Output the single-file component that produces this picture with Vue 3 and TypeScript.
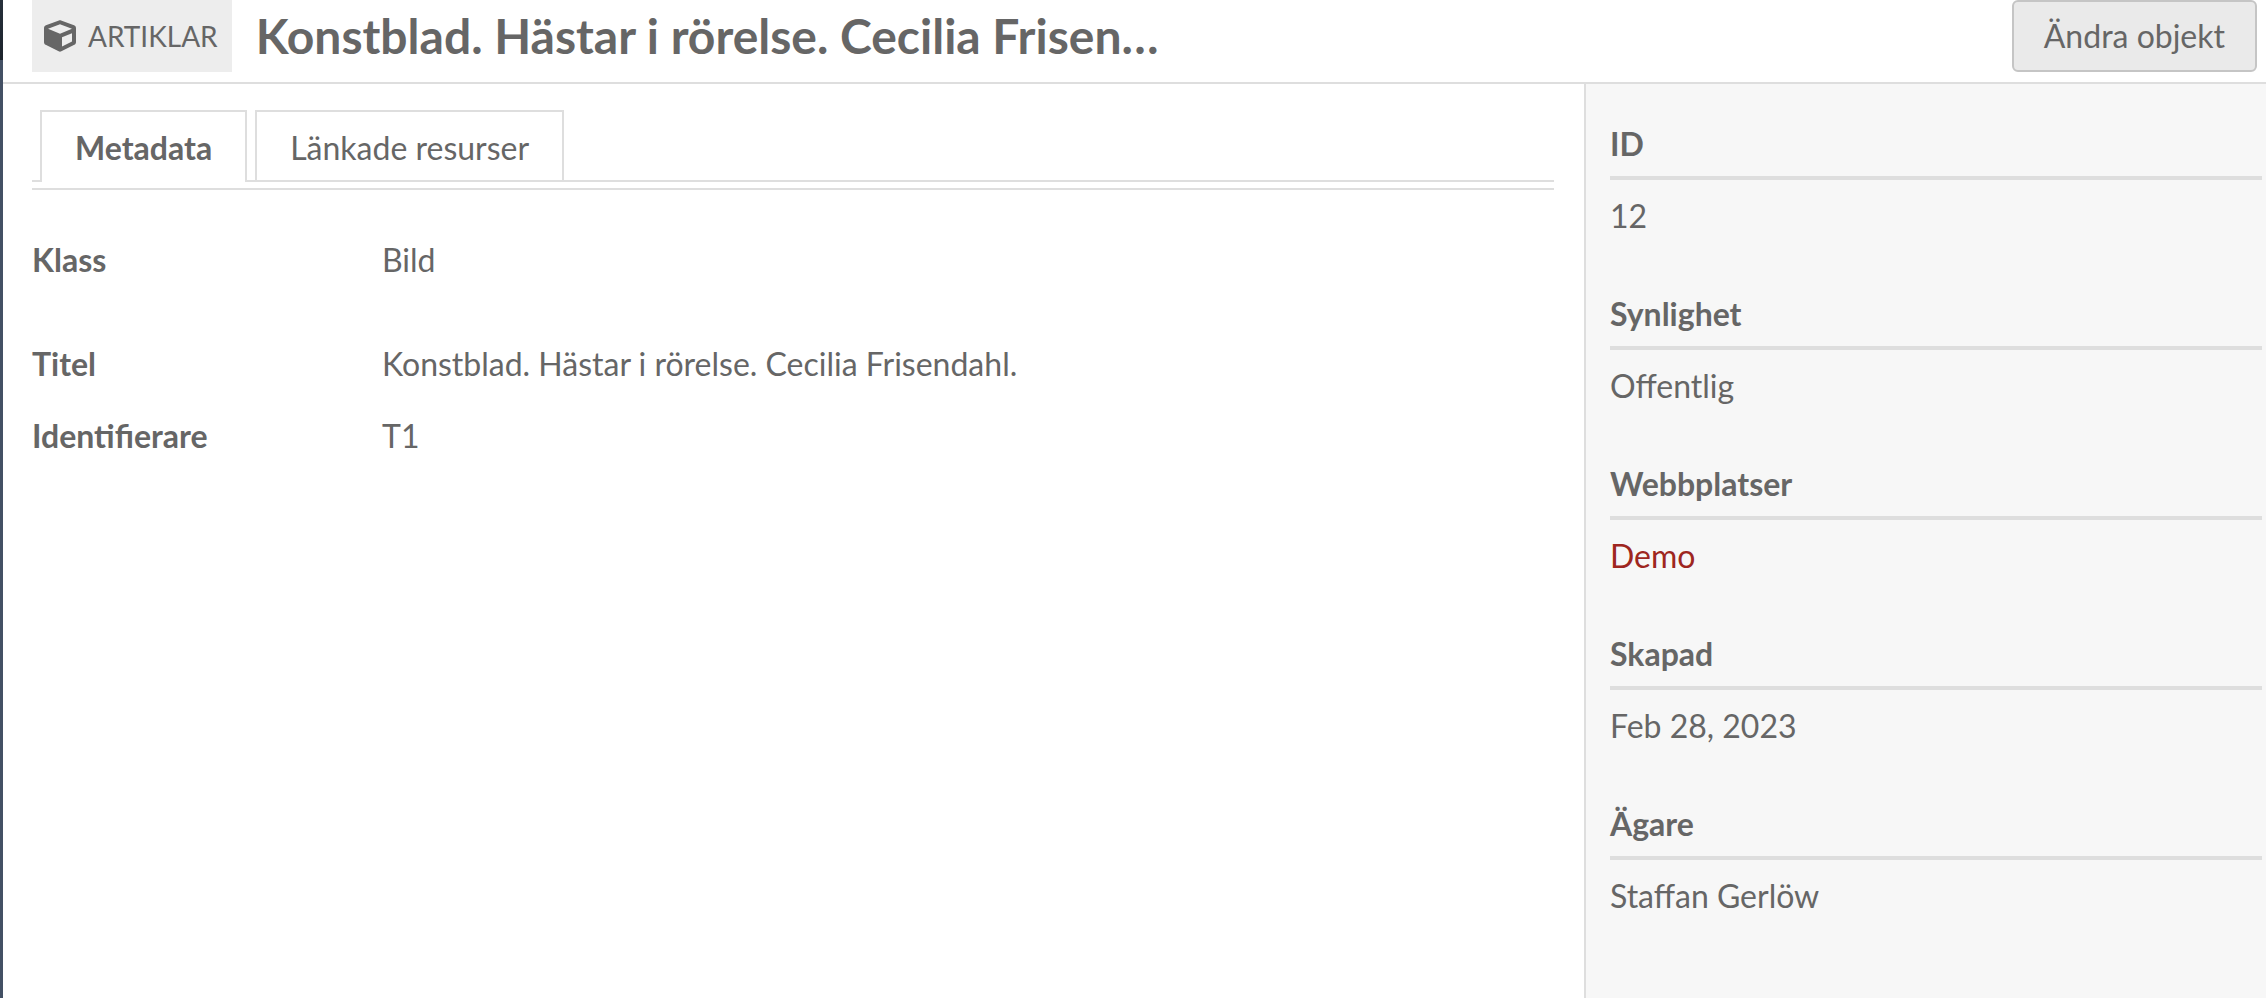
<script setup lang="ts">
interface Field { label: string; value: string; spaced?: boolean }
interface Detail { label: string; value: string; href?: string }

const tabs: string[] = ['Metadata', 'Länkade resurser']
const fields: Field[] = [
  { label: 'Klass', value: 'Bild', spaced: true },
  { label: 'Titel', value: 'Konstblad. Hästar i rörelse. Cecilia Frisendahl.' },
  { label: 'Identifierare', value: 'T1' },
]
const details: Detail[] = [
  { label: 'ID', value: '12' },
  { label: 'Synlighet', value: 'Offentlig' },
  { label: 'Webbplatser', value: 'Demo', href: '#demo' },
  { label: 'Skapad', value: 'Feb 28, 2023' },
  { label: 'Ägare', value: 'Staffan Gerlöw' },
]
</script>

<template>
  <div class="shell">
    <div class="rail"></div>
    <div class="page">
      <header class="header">
        <span class="kind">
          <svg class="cube" viewBox="0 0 512 512" aria-hidden="true">
            <path fill="currentColor" d="M239.1 6.3l-208 78c-18.700 7-31.100 25-31.100 45v225.100c0 18.200 10.300 34.800 26.500 42.900l208 104c13.500 6.800 29.400 6.800 42.900 0l208-104c16.300-8.100 26.500-24.800 26.500-42.900V129.300c0-20-12.400-37.900-31.100-44.900l-208-78C262 2.200 250 2.200 239.100 6.300zM256 68.400l192 72v1.100l-192 78-192-78v-1.100l192-72zm32 356V275.500l160-65v133.900l-160 80z" />
          </svg>
          <span>ARTIKLAR</span>
        </span>
        <h1 class="title">Konstblad. Hästar i rörelse. Cecilia Frisen…</h1>
        <button type="button" class="edit">Ändra objekt</button>
      </header>
      <div class="columns">
        <main class="main">
          <nav class="tabs">
            <button v-for="(tab, i) in tabs" :key="tab" type="button" class="tab" :class="{ active: i === 0 }">{{ tab }}</button>
          </nav>
          <dl class="fields">
            <div v-for="f in fields" :key="f.label" class="field" :class="{ spaced: f.spaced }">
              <dt>{{ f.label }}</dt>
              <dd>{{ f.value }}</dd>
            </div>
          </dl>
        </main>
        <aside class="side">
          <section v-for="d in details" :key="d.label" class="detail">
            <h2>{{ d.label }}</h2>
            <p><a v-if="d.href" :href="d.href">{{ d.value }}</a><template v-else>{{ d.value }}</template></p>
          </section>
        </aside>
      </div>
    </div>
  </div>
</template>

<style>
body { margin: 0; }
</style>

<style scoped>
.shell {
  display: flex;
  min-height: 100vh;
  background: #fff;
  color: #666;
  font-family: Lato, "Open Sans", sans-serif;
  font-size: 32px;
  line-height: 48px;
}
.rail {
  flex: 0 0 3px;
  background: linear-gradient(#27303b, #1c232c 60px, #435064 60px);
}
.page {
  flex: 1;
  min-width: 0;
  display: flex;
  flex-direction: column;
}
.header {
  display: flex;
  align-items: flex-start;
  height: 82px;
  padding: 0 9px 0 29px;
  border-bottom: 2px solid #dedede;
}
.kind {
  display: flex;
  align-items: center;
  gap: 12px;
  height: 72px;
  padding: 0 14px 0 12px;
  background: #ededed;
  font-size: 28px;
}
.cube { width: 32px; height: 32px; }
.title {
  flex: 1;
  margin: 0 0 0 24px;
  font-size: 48px;
  line-height: 72px;
  font-weight: 700;
}
.edit {
  box-sizing: border-box;
  height: 72px;
  padding: 0 30px;
  border: 2px solid #c5c5c5;
  border-radius: 6px;
  background: #eaeaea;
  color: inherit;
  font: inherit;
}
.columns { flex: 1; display: flex; }
.main { flex: 1; padding: 26px 30px 0 29px; }
.tabs {
  display: flex;
  gap: 8px;
  height: 70px;
  padding: 0 8px;
  border-bottom: 2px solid #dedede;
  box-shadow: 0 6px 0 #fff, 0 8px 0 #dedede;
}
.tab {
  box-sizing: border-box;
  height: 70px;
  padding: 4px 33px 0;
  border: 2px solid #dedede;
  border-bottom: 0;
  background: #fff;
  color: inherit;
  font: inherit;
}
.tab.active { height: 72px; padding-top: 2px; font-weight: 700; }
.fields { margin: 54px 0 0; }
.field { display: flex; margin-bottom: 24px; }
.field.spaced { margin-bottom: 56px; }
dt { width: 350px; font-weight: 700; }
dd { margin: 0; }
.side {
  box-sizing: border-box;
  flex: 0 0 682px;
  padding: 36px 4px 0 24px;
  border-left: 2px solid #dedede;
  background: #f7f7f7;
}
.detail { margin-bottom: 50px; }
.detail h2 {
  margin: 0;
  padding-bottom: 8px;
  border-bottom: 4px solid #dedede;
  font-size: 32px;
  line-height: 48px;
}
.detail p { margin: 12px 0 0; }
.detail a { color: #9e2620; text-decoration: none; }
</style>
